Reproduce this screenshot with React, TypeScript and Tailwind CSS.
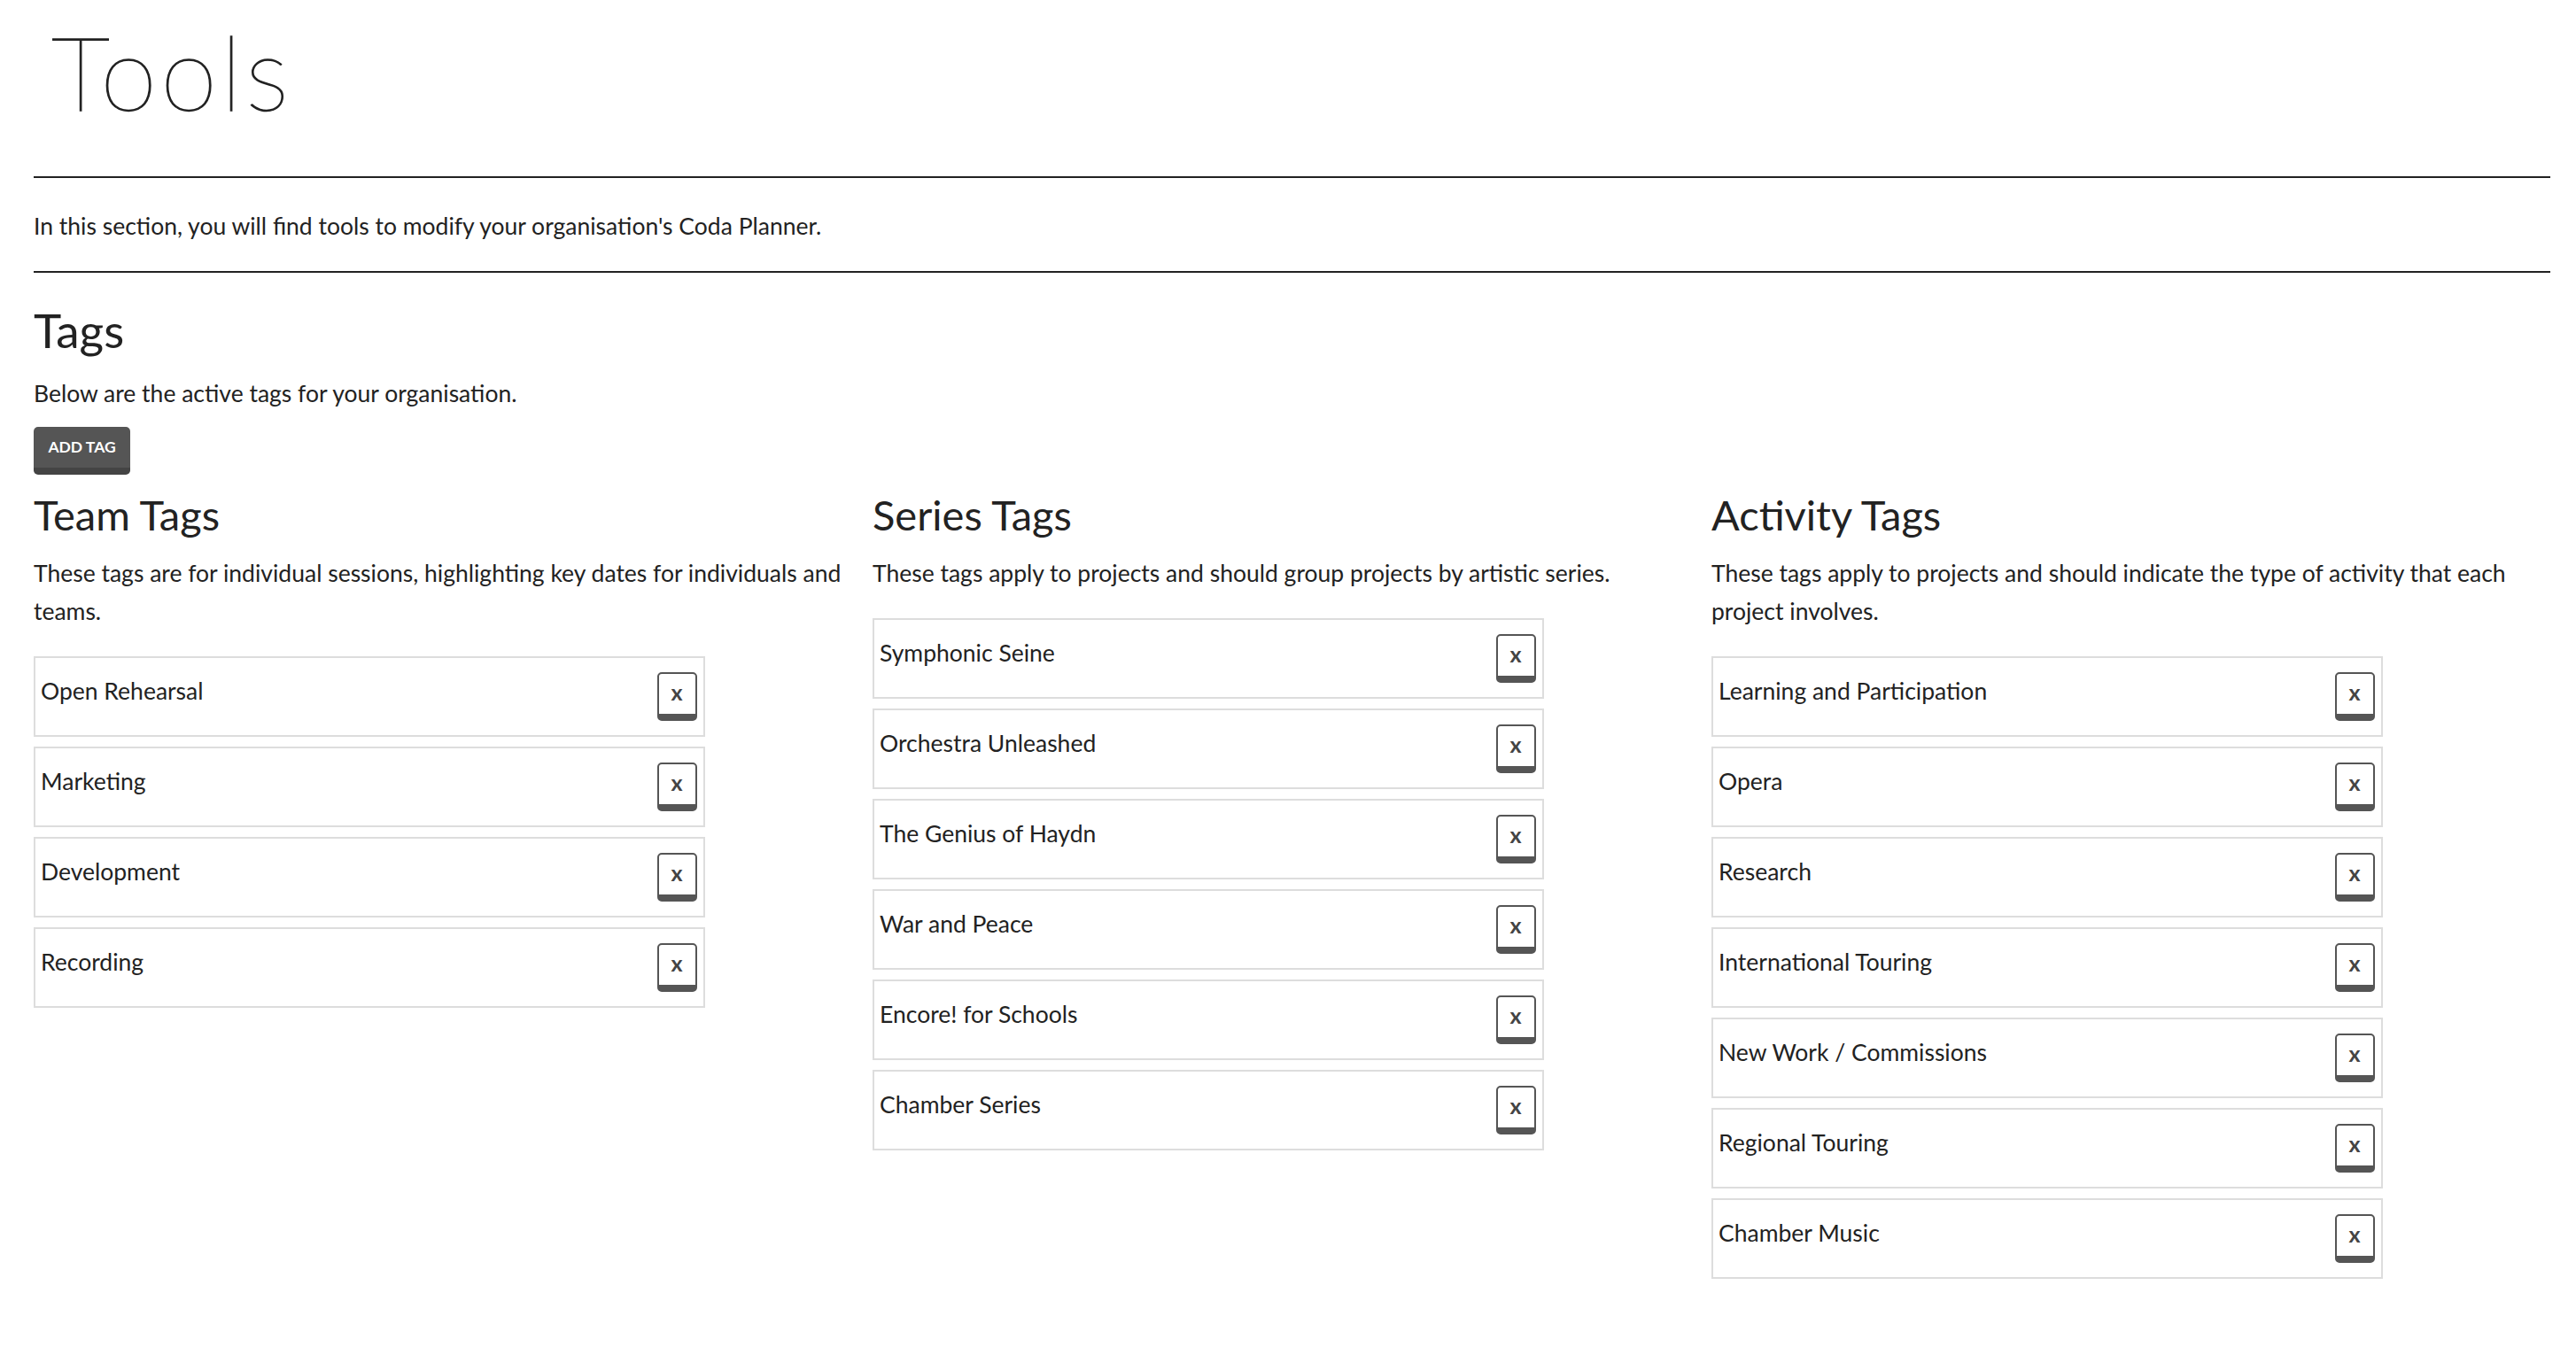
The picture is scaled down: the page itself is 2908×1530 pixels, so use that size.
import React from 'react';

const teamTags = ['Open Rehearsal', 'Marketing', 'Development', 'Recording'];

const seriesTags = [
  'Symphonic Seine',
  'Orchestra Unleashed',
  'The Genius of Haydn',
  'War and Peace',
  'Encore! for Schools',
  'Chamber Series',
];

const activityTags = [
  'Learning and Participation',
  'Opera',
  'Research',
  'International Touring',
  'New Work / Commissions',
  'Regional Touring',
  'Chamber Music',
];

const groups = [
  {
    title: 'Team Tags',
    text: 'These tags are for individual sessions, highlighting key dates for individuals and teams.',
    tags: teamTags,
  },
  {
    title: 'Series Tags',
    text: 'These tags apply to projects and should group projects by artistic series.',
    tags: seriesTags,
  },
  {
    title: 'Activity Tags',
    text: 'These tags apply to projects and should indicate the type of activity that each project involves.',
    tags: activityTags,
  },
];

const TagRow: React.FC<{ name: string }> = ({ name }) => (
  <div className="flex h-[91px] w-4/5 items-center justify-between border-2 border-[#ddd] pl-[6px] pr-[7px]">
    <span className="mb-[12px] text-[26.5px] leading-[43px]">{name}</span>
    <button className="flex h-[55px] w-[45px] items-start justify-center rounded-[5px] border-2 border-b-[8px] border-[#555] bg-white pt-[8px] text-[25px] font-bold leading-none text-[#444]">
      x
    </button>
  </div>
);

const App: React.FC = () => {
  return (
    <div className="min-h-screen bg-white text-[#222] [font-family:Lato,sans-serif]">
      <div className="pl-[38px] pr-[29px]">
        <h1 className="pl-[20px] pt-[23px] text-[116px] font-thin leading-none tracking-[4px] text-[#222] [-webkit-text-stroke:1.3px_#222]">
          Tools
        </h1>
        <div className="mt-[60px] h-[2px] bg-[#222]" />
        <p className="mt-[33px] text-[26.5px] leading-[43px]">
          In this section, you will find tools to modify your organisation's Coda Planner.
        </p>
        <div className="mt-[29px] h-[2px] bg-[#222]" />

        <h2 className="mt-[38px] text-[53px] font-normal leading-none">Tags</h2>
        <p className="mt-[24px] text-[26.5px] leading-[43px]">Below are the active tags for your organisation.</p>
        <button className="mt-[16px] flex h-[54px] w-[109px] items-center justify-center rounded-[5px] border-b-[8px] border-[#444] bg-[#555] text-[17.5px] font-bold uppercase text-white">
          Add Tag
        </button>

        <div className="mt-[22px] grid grid-cols-3">
          {groups.map((g) => (
            <div key={g.title}>
              <h3 className="text-[47px] font-normal leading-none">{g.title}</h3>
              <p className="mt-[21px] pr-[15px] text-[26.5px] leading-[43px]">{g.text}</p>
              <div className="mt-[29px] flex flex-col gap-[11px]">
                {g.tags.map((t) => (
                  <TagRow key={t} name={t} />
                ))}
              </div>
            </div>
          ))}
        </div>
      </div>
    </div>
  );
};

export default App;
